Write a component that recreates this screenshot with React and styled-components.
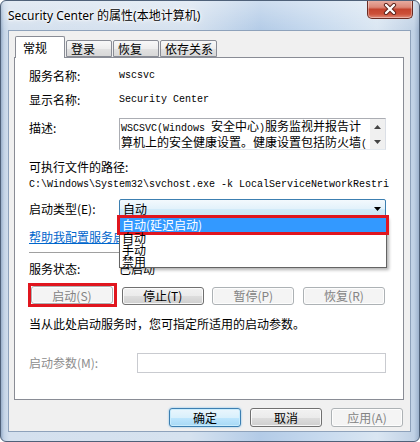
import React from 'react';
import styled, { createGlobalStyle } from 'styled-components';

const CJK = `"Noto Sans CJK SC", "Microsoft YaHei", sans-serif`;
const MONO = `"Liberation Mono", "Noto Sans CJK SC", monospace`;

const Global = createGlobalStyle`
  html, body { margin: 0; padding: 0; background: #ffffff; }
  body { width: 420px; height: 442px; overflow: hidden; font-family: ${CJK}; font-size: 12px; color: #000; }
  * { box-sizing: border-box; }
`;

const Window = styled.div`
  width: 420px;
  height: 442px;
  display: flex;
  flex-direction: column;
  border: 1px solid #4f6179;
  border-radius: 6px;
  overflow: hidden;
  background:
    linear-gradient(180deg, rgba(255,255,255,0.35) 0px, rgba(255,255,255,0) 30px),
    linear-gradient(90deg, #98aec9 0px, #c3d3e6 3px, #d4e0ee 8px, #d6e2ef 45%, #b3cbe7 62%, #c6d9ee 76%, #dae6f2 90%, #c0d1e5 calc(100% - 5px), #9db2cd 100%);
`;

const TitleBar = styled.div`
  height: 29px;
  flex: none;
  display: flex;
  align-items: flex-start;
  padding-left: 7px;
`;

const Title = styled.div`
  margin-top: 7px;
  font-family: "Noto Sans", "Noto Sans CJK SC", sans-serif;
  font-size: 12px;
  line-height: 16px;
  color: #000;
  text-shadow: 0 0 6px #fff, 0 0 3px #fff, 0 0 2px #fff;
  white-space: nowrap;
`;

const CloseButton = styled.div`
  margin-left: auto;
  margin-right: 6px;
  margin-top: -1px;
  width: 46px;
  height: 19px;
  border: 1px solid #6a2b23;
  border-top: none;
  border-radius: 0 0 5px 5px;
  background: linear-gradient(180deg, #e9b0a5 0%, #dc8878 40%, #c4442f 52%, #cc5039 78%, #e08d7b 100%);
  box-shadow: inset 0 0 0 1px rgba(255,255,255,0.35);
  display: flex;
  align-items: center;
  justify-content: center;
`;

const Client = styled.div`
  flex: none;
  margin: 0 8px 0 7px;
  height: 402px;
  background: #f0f0f0;
  border: 1px solid #8ea2bb;
  padding: 5px 6px 0 5px;
  display: flex;
  flex-direction: column;
`;

const TabRow = styled.div`
  height: 21px;
  display: flex;
  align-items: flex-end;
  gap: 1px;
  padding-left: 1px;
  flex: none;
`;

const Tab = styled.div`
  position: relative;
  z-index: ${p => (p.$active ? 2 : 1)};
  width: ${p => p.$w}px;
  height: ${p => (p.$active ? 22 : 17)}px;
  margin-bottom: ${p => (p.$active ? -1 : 0)}px;
  padding-left: ${p => (p.$active ? 7 : 4)}px;
  padding-top: ${p => (p.$active ? 3 : 0)}px;
  border: 1px solid #898c95;
  border-bottom: ${p => (p.$active ? 'none' : '1px solid #898c95')};
  border-radius: 2px 2px 0 0;
  background: ${p => (p.$active ? '#ffffff' : 'linear-gradient(180deg, #f8f8f8 0%, #eeeeee 50%, #e2e2e2 52%, #d8d8d8 100%)')};
  font-size: 12px;
  line-height: 15px;
  white-space: nowrap;
`;

const Panel = styled.div`
  position: relative;
  height: 343px;
  flex: none;
  background: #ffffff;
  border: 1px solid #898c95;
  padding: 0 17px 0 14px;
  display: flex;
  flex-direction: column;
`;

const Row = styled.div`
  display: flex;
  align-items: ${p => (p.$top ? 'flex-start' : 'center')};
  min-height: 16px;
  margin-top: ${p => p.$mt || 0}px;
  flex: none;
`;

const Label = styled.div`
  width: ${p => p.$w || 90}px;
  flex: none;
  font-size: 12px;
  line-height: 16px;
  padding-top: ${p => p.$pt || 0}px;
  color: ${p => (p.$disabled ? '#8d8d8d' : '#000')};
  white-space: nowrap;
`;

const Value = styled.div`
  font-family: ${MONO};
  font-size: 10px;
  line-height: 16px;
  white-space: nowrap;
`;

const Text = styled.div`
  font-size: 12px;
  line-height: 16px;
  white-space: nowrap;
`;

const Mono = styled.span`
  font-family: ${MONO};
  font-size: 10px;
`;

const TextArea = styled.div`
  position: relative;
  width: 267px;
  height: 32px;
  border: 1px solid #abadb3;
  border-right-color: #dbdfe6;
  border-bottom-color: #e3e9ef;
  padding: 0 16px 0 1px;
  background: #fff;
  overflow: hidden;
`;

const AreaLine = styled.div`
  font-size: 12px;
  line-height: 13px;
  white-space: nowrap;
`;

const ScrollBar = styled.div`
  position: absolute;
  top: 0;
  right: 0;
  width: 15px;
  height: 30px;
  background: #f0f0f0;
  display: flex;
  flex-direction: column;
  justify-content: space-between;
`;

const ScrollArrow = styled.div`
  height: 15px;
  display: flex;
  align-items: center;
  justify-content: center;
`;

const SelectWrap = styled.div`
  position: relative;
  width: 267px;
  height: 19px;
  z-index: 5;
`;

const SelectBox = styled.div`
  height: 19px;
  border: 1px solid #3c7fb1;
  border-radius: 2px;
  background: linear-gradient(180deg, #f3f9fd 0%, #e3f2fb 50%, #d3ebf9 52%, #c9e5f6 100%);
  padding-left: 3px;
  display: flex;
  align-items: center;
  justify-content: space-between;
  font-size: 12px;
  line-height: 16px;
`;

const DropList = styled.div`
  position: absolute;
  left: 0;
  top: 18px;
  width: 268px;
  height: 51px;
  background: #fff;
  border: 1px solid #646464;
  box-shadow: 2px 2px 3px rgba(0,0,0,0.3);
  display: flex;
  flex-direction: column;
`;

const DropItem = styled.div`
  height: ${p => (p.$hl ? 14 : 12)}px;
  line-height: ${p => (p.$hl ? 14 : 12)}px;
  padding-left: 2px;
  font-size: 12px;
  white-space: nowrap;
  background: ${p => (p.$hl ? '#3399ff' : 'transparent')};
  color: ${p => (p.$hl ? '#fff' : '#000')};
  outline: ${p => (p.$hl ? '3px solid #e0161f' : 'none')};
  flex: none;
`;

const Link = styled.a`
  font-size: 12px;
  line-height: 16px;
  color: #0066cc;
  text-decoration: underline;
  white-space: nowrap;
`;

const Separator = styled.div`
  height: 2px;
  margin-top: ${p => p.$mt}px;
  border-top: 1px solid #a0a0a0;
  border-bottom: 1px solid #ffffff;
  flex: none;
`;

const ButtonRow = styled.div`
  display: flex;
  align-items: center;
  justify-content: ${p => p.$end ? 'flex-end' : 'space-between'};
  gap: ${p => p.$gap || 0}px;
  margin: ${p => p.$mt}px 1px 0 ${p => p.$ml || 0}px;
  flex: none;
`;

const Marker = styled.div`
  border: 3px solid #e0161f;
  margin: -3px -4px -2px -3px;
  padding: 0 1px 0 0;
  display: flex;
`;

const Button = styled.div`
  width: ${p => p.$w}px;
  height: ${p => p.$h}px;
  border-radius: 3px;
  display: flex;
  align-items: center;
  justify-content: center;
  font-size: 12px;
  white-space: nowrap;
  border: 1px solid ${p => p.$disabled ? '#adb2b5' : p.$default ? '#3c7fb1' : '#707070'};
  color: ${p => (p.$disabled ? '#838383' : '#000')};
  background: ${p =>
    p.$disabled
      ? '#f4f4f4'
      : p.$default
      ? 'linear-gradient(180deg, #eaf6fd 0%, #d9f0fc 50%, #bee6fd 52%, #a7d9f5 100%)'
      : 'linear-gradient(180deg, #f2f2f2 0%, #ebebeb 50%, #dddddd 52%, #cfcfcf 100%)'};
  box-shadow: ${p => p.$default ? 'inset 0 0 0 1px #c8ecfd, 0 0 2px #6ab6e8' : 'inset 0 0 0 1px rgba(255,255,255,0.8)'};
`;

const ParamInput = styled.div`
  width: 249px;
  height: 20px;
  border: 1px solid #c9cbd0;
  background: #fff;
`;

const Arrow = ({ up, size = 7, color = '#444' }) => (
  <svg width={size} height={4} viewBox="0 0 7 4">
    <path d={up ? 'M0 4 L3.5 0 L7 4 Z' : 'M0 0 L7 0 L3.5 4 Z'} fill={color} />
  </svg>
);

export default function App() {
  return (
    <>
      <Global />
      <Window>
        <TitleBar>
          <Title>Security Center 的属性(本地计算机)</Title>
          <CloseButton>
            <svg width="14" height="12" viewBox="0 0 14 12">
              <path d="M3 2 L11 10 M11 2 L3 10" stroke="#5b2019" strokeWidth="4.2" strokeLinecap="round" />
              <path d="M3 2 L11 10 M11 2 L3 10" stroke="#ffffff" strokeWidth="2.4" strokeLinecap="round" />
            </svg>
          </CloseButton>
        </TitleBar>
        <Client>
          <TabRow>
            <Tab $active $w={50}>常规</Tab>
            <Tab $w={46}>登录</Tab>
            <Tab $w={46}>恢复</Tab>
            <Tab $w={57}>依存关系</Tab>
          </TabRow>
          <Panel>
            <Row $mt={10}>
              <Label>服务名称:</Label>
              <Value>wscsvc</Value>
            </Row>
            <Row $mt={8}>
              <Label>显示名称:</Label>
              <Value>Security Center</Value>
            </Row>
            <Row $mt={10} $top>
              <Label $pt={2}>描述:</Label>
              <TextArea>
                <AreaLine>
                  <Mono>WSCSVC(Windows </Mono>安全中心<Mono>)</Mono>服务监视并报告计
                </AreaLine>
                <AreaLine>
                  算机上的安全健康设置。健康设置包括防火墙<Mono>(</Mono>
                </AreaLine>
                <ScrollBar>
                  <ScrollArrow><Arrow up /></ScrollArrow>
                  <ScrollArrow><Arrow /></ScrollArrow>
                </ScrollBar>
              </TextArea>
            </Row>
            <Row $mt={9}>
              <Text>可执行文件的路径:</Text>
            </Row>
            <Row $mt={2}>
              <Value>C:\Windows\System32\svchost.exe -k LocalServiceNetworkRestri</Value>
            </Row>
            <Row $mt={6}>
              <Label>启动类型(E):</Label>
              <SelectWrap>
                <SelectBox>
                  <span>自动</span>
                  <svg width="14" height="8" viewBox="0 0 14 8">
                    <path d="M3 2 L10 2 L6.5 6 Z" fill="#000" />
                  </svg>
                </SelectBox>
                <DropList>
                  <DropItem $hl>自动(延迟启动)</DropItem>
                  <DropItem>自动</DropItem>
                  <DropItem>手动</DropItem>
                  <DropItem>禁用</DropItem>
                </DropList>
              </SelectWrap>
            </Row>
            <Row $mt={11}>
              <Link>帮助我配置服务启动选项。</Link>
            </Row>
            <Separator $mt={7} />
            <Row $mt={7}>
              <Label>服务状态:</Label>
              <Text>已启动</Text>
            </Row>
            <ButtonRow $mt={9} $ml={2}>
              <Marker>
                <Button $w={82} $h={18} $disabled>启动(S)</Button>
              </Marker>
              <Button $w={82} $h={18}>停止(T)</Button>
              <Button $w={82} $h={18} $disabled>暂停(P)</Button>
              <Button $w={82} $h={18} $disabled>恢复(R)</Button>
            </ButtonRow>
            <Row $mt={11}>
              <Text>当从此处启动服务时，您可指定所适用的启动参数。</Text>
            </Row>
            <Row $mt={21}>
              <Label $w={108} $disabled>启动参数(M):</Label>
              <ParamInput />
            </Row>
          </Panel>
          <ButtonRow $mt={8} $end $gap={9}>
            <Button $w={72} $h={19} $default>确定</Button>
            <Button $w={72} $h={19}>取消</Button>
            <Button $w={72} $h={19} $disabled>应用(A)</Button>
          </ButtonRow>
        </Client>
      </Window>
    </>
  );
}
